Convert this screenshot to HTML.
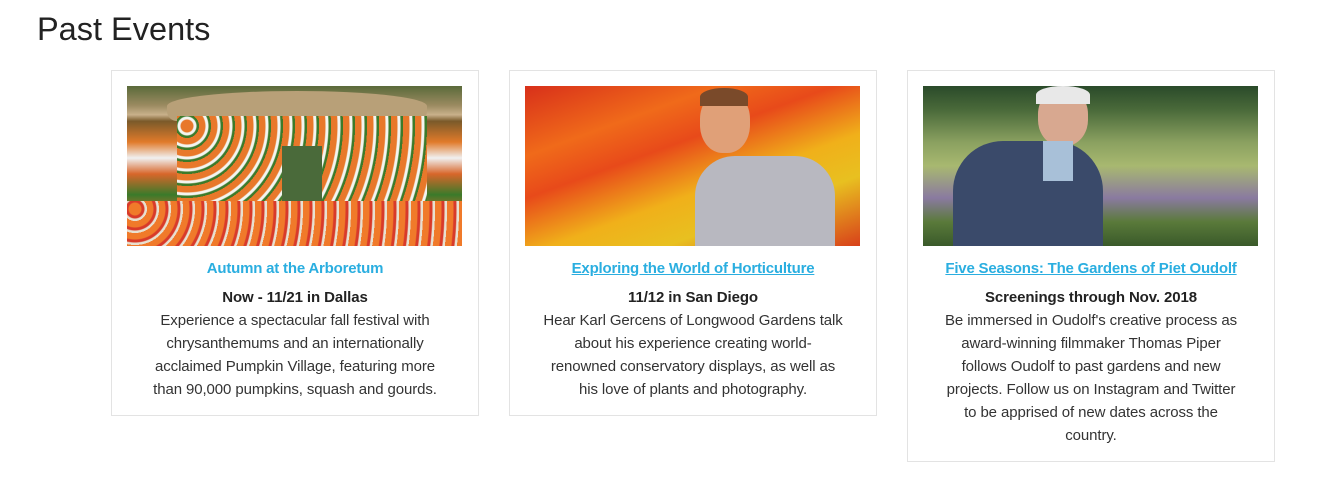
<!DOCTYPE html>
<html><head><meta charset="utf-8"><style>
body{margin:0;background:#fff;width:1335px;height:487px;overflow:hidden;font-family:"Liberation Sans",sans-serif;}
h1{position:absolute;left:37px;top:11px;margin:0;font-weight:normal;font-size:32.5px;color:#222;}
.card{position:absolute;top:70px;width:368px;border:1px solid #e3e3e3;box-sizing:border-box;text-align:center;color:#333;}
.img{position:absolute;left:15px;top:15px;width:335px;height:160px;overflow:hidden}
.t{position:absolute;left:0;right:0;top:189px;font-size:15px;font-weight:bold;color:#2aaee0;white-space:nowrap;letter-spacing:-0.2px}
.t u{text-decoration:underline}
.b{position:absolute;left:0;right:0;top:215px;font-size:15px;line-height:23px;white-space:nowrap;letter-spacing:-0.1px}
.b b{color:#222}
</style></head><body>
<h1>Past Events</h1>

<div class="card" style="left:111px;height:346px">
<div class="img" style="background:linear-gradient(180deg,#5a6a3a 0,#9a8a60 12%,#c8b08a 18%,#7a5a2a 22%,#e07a2a 35%,#f0f0f0 45%,#d8662a 55%,#3a7a2a 68%,#e86a2a 82%,#c8402a 100%)">
<div style="position:absolute;left:40px;top:5px;width:260px;height:30px;background:#b8a078;border-radius:50% 50% 10px 10px"></div>
<div style="position:absolute;left:50px;top:30px;width:250px;height:100px;background:repeating-radial-gradient(circle at 10px 10px,#e8782a 0 6px,#f4f4f0 7px 9px,#3d7a2a 10px 12px)"></div>
<div style="position:absolute;left:155px;top:60px;width:40px;height:70px;background:#4a6a3a"></div>
<div style="position:absolute;left:0;top:115px;width:335px;height:45px;background:repeating-radial-gradient(circle at 8px 8px,#f07a2a 0 6px,#d83a2a 7px 9px,#e8e0d0 10px 12px)"></div>
</div>
<div class="t">Autumn at the Arboretum</div>
<div class="b"><b>Now - 11/21 in Dallas</b><br>Experience a spectacular fall festival with<br>chrysanthemums and an internationally<br>acclaimed Pumpkin Village, featuring more<br>than 90,000 pumpkins, squash and gourds.</div>
</div>

<div class="card" style="left:509px;height:346px">
<div class="img" style="background:linear-gradient(160deg,#d8301a 0,#f06a1a 25%,#e84a1a 40%,#f0b01a 60%,#e8c020 75%,#d8401a 100%)">
<div style="position:absolute;left:175px;top:5px;width:50px;height:62px;background:#e0a078;border-radius:45%"></div>
<div style="position:absolute;left:175px;top:2px;width:48px;height:18px;background:#7a4a2a;border-radius:50% 50% 0 0"></div>
<div style="position:absolute;left:170px;top:70px;width:140px;height:90px;background:#b8b8c0;border-radius:40px 40px 0 0"></div>
</div>
<div class="t"><u>Exploring the World of Horticulture</u></div>
<div class="b"><b>11/12 in San Diego</b><br>Hear Karl Gercens of Longwood Gardens talk<br>about his experience creating world-<br>renowned conservatory displays, as well as<br>his love of plants and photography.</div>
</div>

<div class="card" style="left:907px;height:392px">
<div class="img" style="background:linear-gradient(180deg,#2a4a2a 0,#4a6a3a 15%,#8aa060 35%,#a8b870 50%,#8a7aa0 70%,#5a7a3a 85%,#3a5a2a 100%)">
<div style="position:absolute;left:115px;top:2px;width:50px;height:58px;background:#d8a890;border-radius:45%"></div>
<div style="position:absolute;left:113px;top:0;width:54px;height:18px;background:#e8e8e8;border-radius:50% 50% 0 0"></div>
<div style="position:absolute;left:30px;top:55px;width:150px;height:105px;background:#3a4a6a;border-radius:50px 50px 0 0"></div>
<div style="position:absolute;left:120px;top:55px;width:30px;height:40px;background:#a8c0d8"></div>
</div>
<div class="t"><u>Five Seasons: The Gardens of Piet Oudolf</u></div>
<div class="b"><b>Screenings through Nov. 2018</b><br>Be immersed in Oudolf's creative process as<br>award-winning filmmaker Thomas Piper<br>follows Oudolf to past gardens and new<br>projects. Follow us on Instagram and Twitter<br>to be apprised of new dates across the<br>country.</div>
</div>
</body></html>
